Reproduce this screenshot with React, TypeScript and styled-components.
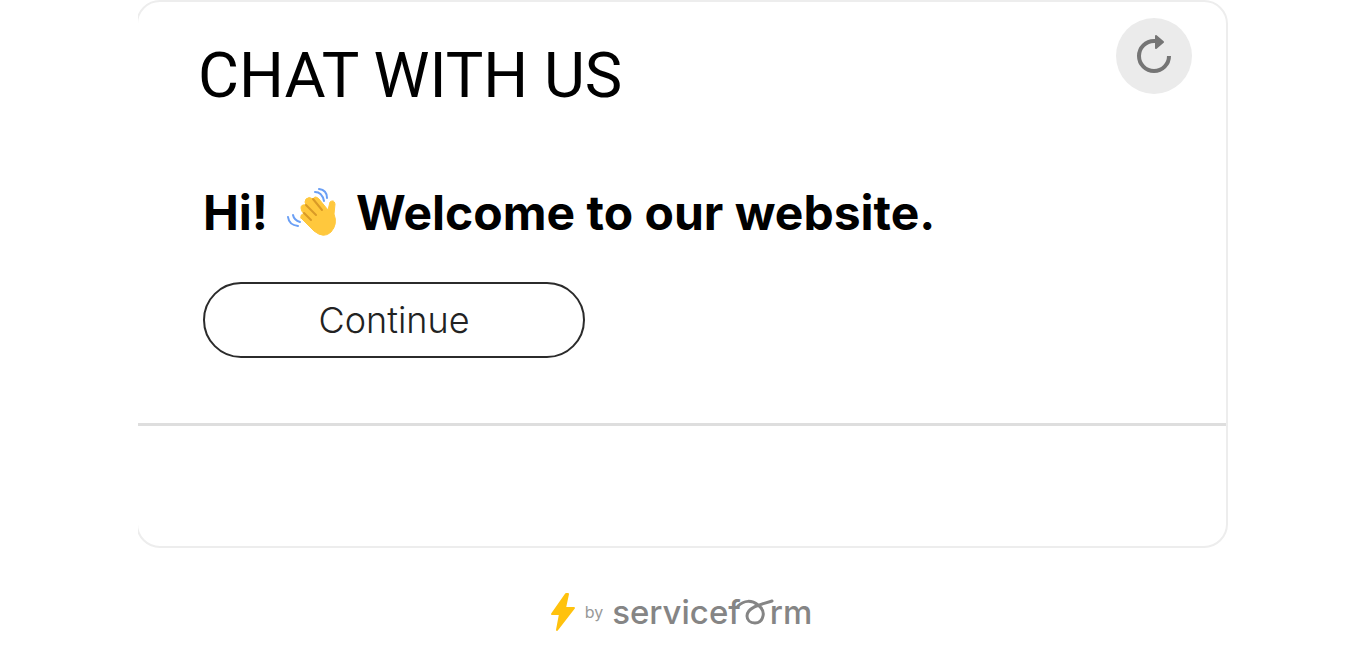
import React from "react";
import styled, { createGlobalStyle } from "styled-components";

const GlobalStyle = createGlobalStyle`
  *, *::before, *::after { box-sizing: border-box; }
  body { margin: 0; background: #fff; font-family: Inter, "Liberation Sans", sans-serif; color: #000; }
`;

const Page = styled.div`
  padding: 0 138px;
`;

const Frame = styled.div`
  overflow: hidden;
`;

const Card = styled.main`
  margin-left: -2px;
  border: 2px solid #ededed;
  border-radius: 24px;
`;

const Header = styled.header`
  display: flex;
  justify-content: space-between;
  align-items: flex-start;
  padding: 16px 34px 0 60px;
`;

const Title = styled.h1`
  margin: 20px 0 0;
  font: 400 63px/76px Roboto, "Liberation Sans", sans-serif;
`;

const ResetButton = styled.button`
  display: flex;
  align-items: center;
  justify-content: center;
  width: 76px;
  height: 76px;
  padding: 0;
  border: 0;
  border-radius: 50%;
  background: #ebebeb;
  cursor: pointer;
`;

const Conversation = styled.section`
  padding: 67px 65px 65px;
`;

const Greeting = styled.p`
  display: flex;
  align-items: center;
  margin: 0 0 37px;
  font-size: 48px;
  font-weight: 700;
  line-height: 64px;
  white-space: nowrap;
`;

const Wave = styled.svg`
  width: 52px;
  height: 52px;
  margin: 0 18px;
`;

const ContinueButton = styled.button`
  width: 382px;
  height: 76px;
  padding: 0;
  border: 2px solid #2b2b2b;
  border-radius: 38px;
  background: #fff;
  color: #222;
  font: 300 36px/44px Inter, "Liberation Sans", sans-serif;
  cursor: pointer;
`;

const Composer = styled.footer`
  height: 123px;
  border-top: 3px solid #dedede;
`;

const Brand = styled.a`
  display: flex;
  align-items: center;
  justify-content: center;
  margin-top: 43px;
  padding-right: 4px;
  color: #858585;
  text-decoration: none;
`;

const By = styled.span`
  margin: 0 9px;
  font: 400 16px/40px Inter, sans-serif;
  color: #999;
`;

const Wordmark = styled.span`
  display: flex;
  font: 500 33px/40px Inter, sans-serif;
`;

const Loop = styled.svg`
  margin: 0 -4px 0 -9px;
`;

export default function App() {
  return (
    <Page>
      <GlobalStyle />
      <Frame>
        <Card>
          <Header>
            <Title>CHAT WITH US</Title>
            <ResetButton aria-label="Restart chat">
              <svg width="44" height="44" viewBox="0 0 44 44" fill="none" stroke="#757575" strokeWidth="4" strokeLinecap="round" strokeLinejoin="round">
                <path d="M37 22A15 15 0 1 1 22 7H28" strokeLinecap="butt" />
                <path d="M24 2L31 8L24 14Z" fill="#757575" strokeWidth="2" />
              </svg>
            </ResetButton>
          </Header>
          <Conversation>
            <Greeting>
              <span>Hi!</span>
              <Wave viewBox="0 0 52 52" role="img" aria-label="waving hand" fill="none" strokeLinecap="round" strokeLinejoin="round">
                <path d="M15 31L28 44Q38 52 45 45Q52 37 48 27L49 17Q48 12 44 15L42 23L33 12Q29 8 27 12Q23 9 20 12Q18 15 20 18Q15 17 15 21Q15 24 18 27Q14 27 15 31Z" fill="#ffc83d" stroke="#ffc83d" />
                <path d="M27 12L36 23M20 18L30 28M18 26L25 33" stroke="#d99a27" strokeWidth="2" />
                <path d="M29 5Q36 5 38 14M33 2Q41 3 41 11M2 30Q3 38 12 39M7 28Q8 33 14 35" stroke="#6a9ff5" strokeWidth="2" />
              </Wave>
              <span>Welcome to our website.</span>
            </Greeting>
            <ContinueButton>Continue</ContinueButton>
          </Conversation>
          <Composer />
        </Card>
      </Frame>
      <Brand href="#">
        <svg width="26" height="42" viewBox="0 0 26 42" aria-hidden="true">
          <path d="M16 3L2 23H10L7 39L24 17H15L18 3Z" fill="#ffc20e" stroke="#ffc20e" strokeWidth="2" strokeLinejoin="round" />
        </svg>
        <By>by</By>
        <Wordmark>
          servicef
          <Loop width="42" height="40" viewBox="0 0 42 40" fill="none" stroke="#858585" strokeWidth="3" strokeLinecap="round" role="img" aria-label="o">
            <path d="M6 14C12 8 20 8 26 13C30 16 32 20 31 24C30 29 27 31 23 31C18 31 15 28 15 24C15 16 26 13 40 9" />
          </Loop>
          rm
        </Wordmark>
      </Brand>
    </Page>
  );
}
